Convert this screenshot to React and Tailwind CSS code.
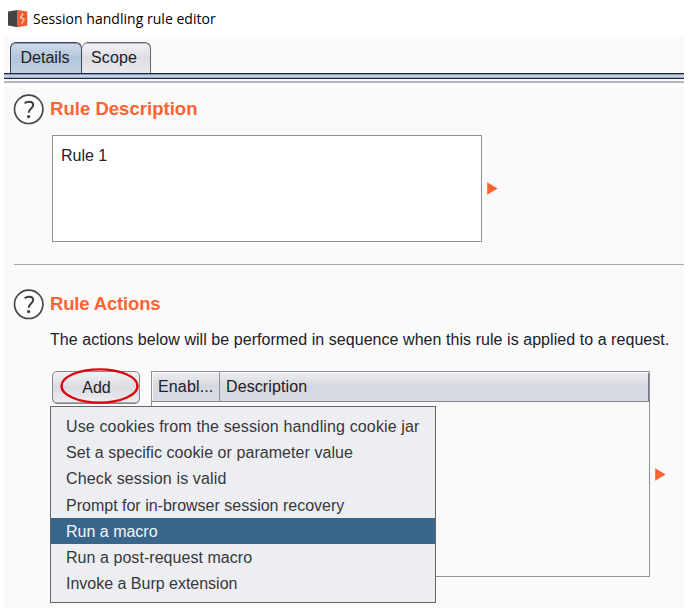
const menuItems = [
  { label: 'Use cookies from the session handling cookie jar', tracking: 'tracking-[0.14px]' },
  { label: 'Set a specific cookie or parameter value', tracking: 'tracking-[0.06px]' },
  { label: 'Check session is valid', tracking: 'tracking-[0.14px]' },
  { label: 'Prompt for in-browser session recovery', tracking: 'tracking-[0px]' },
  { label: 'Run a macro', tracking: 'tracking-[0px]', selected: true },
  { label: 'Run a post-request macro', tracking: 'tracking-[0.05px]' },
  { label: 'Invoke a Burp extension', tracking: 'tracking-[-0.01px]' },
];

function BurpLogo() {
  return (
    <svg width="20" height="18" viewBox="0 0 20 18" className="shrink-0">
      <path d="M0 1.6 L9.6 0 V17.2 L0 15.4 Z" fill="#434346" />
      <path d="M9.6 0 L19.3 1.6 V15.4 L9.6 17.2 Z" fill="#f1592f" />
      <path d="M15.2 3.4 L12.6 7.6 L16.2 9.4 L13.6 13.6" fill="none" stroke="#ffc6b0" strokeWidth="1.4" />
    </svg>
  );
}

function HelpIcon() {
  return (
    <svg width="31" height="31" viewBox="0 0 31 31" className="shrink-0">
      <circle cx="15.7" cy="15.3" r="14.2" fill="#fcfcfc" stroke="#45454a" strokeWidth="1.7" />
      <path
        d="M11.6 9.3 C12.9 8.2 14.5 7.7 16 7.7 C18.6 7.7 20.2 9.1 20.2 11.1 C20.2 14.4 15.7 14.9 15.7 18.8"
        fill="none"
        stroke="#3c3c41"
        strokeWidth="2"
      />
      <circle cx="15.6" cy="22.6" r="1.6" fill="#3c3c41" />
    </svg>
  );
}

function Arrow() {
  return (
    <svg width="11" height="13" viewBox="0 0 11 13" className="shrink-0">
      <path d="M0.2 0.3 L10.6 6.5 L0.2 12.7 Z" fill="#fd6233" />
    </svg>
  );
}

function Heading({ children, className }) {
  return (
    <div className="flex h-[31px] items-center pl-[9px]">
      <HelpIcon />
      <h2 className={`-mt-[2px] ml-[6px] whitespace-nowrap text-[18.5px] leading-[24px] font-bold text-[#fc6334] ${className}`}>{children}</h2>
    </div>
  );
}

export default function App() {
  return (
    <div className="h-[608px] w-[694px] overflow-hidden bg-white font-['Liberation_Sans',sans-serif] text-[16px] text-[#202029]">
      <header className="flex h-[37px] items-center gap-[5px] pl-[8px] font-['Open_Sans','Noto_Sans',sans-serif] text-[14px] text-black">
        <BurpLogo />
        <span className="whitespace-nowrap tracking-[0.03px]">Session handling rule editor</span>
      </header>
      <main className="ml-[4px] flex h-[571px] w-[680px] flex-col bg-[#fafafa]">
        <nav className="mt-[5px] flex h-[31px] shrink-0 pl-[6px]">
          <div className="flex w-[72px] items-center justify-center rounded-t-[6px] border-[1.5px] border-b-0 border-[#3c465a] bg-linear-to-b from-[#d0dceb] via-[#b2c5da] to-[#c0d1e4] pr-[2px] shadow-[inset_0_1px_0_#8e9bb0]">
            Details
          </div>
          <div className="flex w-[69px] items-center justify-center rounded-t-[6px] border-[1.5px] border-b-0 border-l-0 border-[#65656d] bg-linear-to-b from-[#f4f4f6] via-[#dcdde2] to-[#eaeaee] pr-[4px] tracking-[0.1px] shadow-[inset_0_1px_0_#bcbcc4]">
            Scope
          </div>
        </nav>
        <div className="h-[6px] shrink-0 border-y border-[#1f2740] bg-[#c0d3e8] shadow-[inset_0_1px_0_#8595ae,inset_0_-1px_0_#a3acc4]" />
        <div className="mt-[2px] h-[2px] shrink-0 bg-[#b5b4c4]" />

        <section className="mt-[11px]">
          <Heading className="tracking-[0.03px]">Rule Description</Heading>
          <div className="mt-[10px] flex items-center gap-[5px] pl-[48px]">
            <div className="h-[107px] w-[430px] border border-[#909095] bg-white px-[8px] py-[8px] leading-[24px]">Rule 1</div>
            <Arrow />
          </div>
        </section>

        <div className="ml-[10px] mt-[22px] h-px shrink-0 bg-[#a9a9ac]" />

        <section className="mt-[24px]">
          <Heading className="tracking-[-0.16px]">Rule Actions</Heading>
          <p className="mt-[8px] whitespace-nowrap pl-[46px] leading-[24px] tracking-[0.055px]">
            The actions below will be performed in sequence when this rule is applied to a request.
          </p>
          <div className="relative mt-[19px] flex pl-[48px]">
            <div className="relative flex h-[33px] w-[88px] items-center justify-center rounded-[5px] border border-[#85858c] bg-linear-to-b from-[#f2f2f4] via-[#d9dbe1] to-[#eeeff2] pt-px pl-px shadow-[inset_0_-1px_0_#a5a6ac]">
              Add
              <svg width="79" height="36" viewBox="0 0 79 36" className="absolute -top-[4px] left-[7px]">
                <ellipse cx="39.5" cy="18" rx="38" ry="16.6" fill="none" stroke="#e1000b" strokeWidth="2.4" />
              </svg>
            </div>
            <div className="ml-[11px] h-[206px] w-[499px] border border-[#909298]">
              <div className="flex h-[30px] border-b border-[#85888f] bg-linear-to-b from-[#eeeef1] via-[#d6d8df] to-[#d9dce3] leading-[30px] shadow-[inset_1px_1px_0_#f8f8fa,inset_-1px_0_0_#737a88]">
                <div className="w-[68px] border-r border-[#8f929a] pl-[6px] tracking-[0.15px]">Enabl...</div>
                <div className="pl-[6px] tracking-[0.1px]">Description</div>
              </div>
            </div>
            <div className="ml-[5px] flex h-[207px] items-center">
              <Arrow />
            </div>
            <ul className="absolute left-[46px] top-[35px] h-[197px] w-[386px] border border-[#63666a] bg-[#edeef2] pt-[6px] text-[#37373c]">
              {menuItems.map((item) => (
                <li
                  key={item.label}
                  className={`h-[26.2px] whitespace-nowrap pl-[15px] leading-[27px] ${item.tracking} ${item.selected ? 'bg-[#38668a] text-[#f4f7fa]' : ''}`}
                >
                  {item.label}
                </li>
              ))}
            </ul>
          </div>
        </section>
      </main>
    </div>
  );
}
